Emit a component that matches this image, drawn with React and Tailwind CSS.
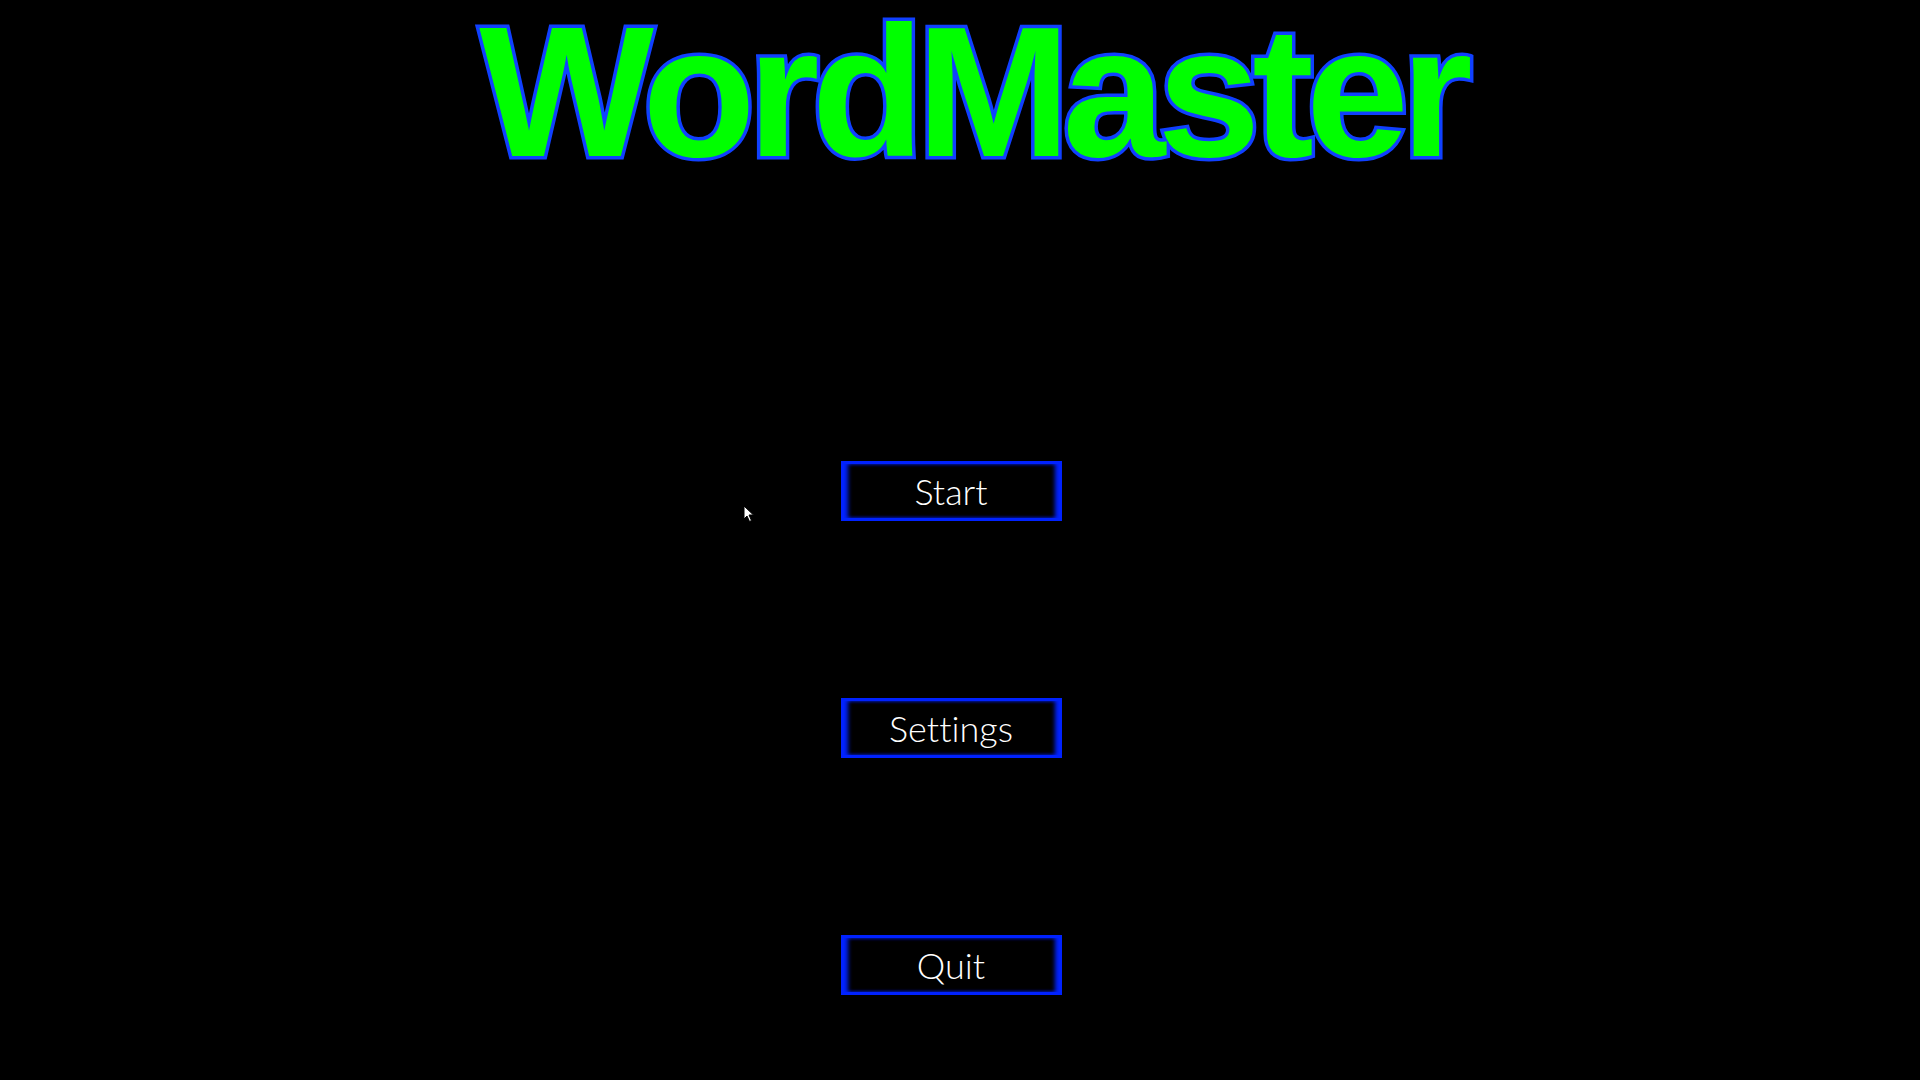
import React from 'react';

const buttons = ['Start', 'Settings', 'Quit'];

export default function App() {
  return (
    <div className="relative h-screen w-full overflow-hidden bg-black">
      <div className="flex flex-col items-center">
        {/* Title */}
        <h1
          className="ml-[24px] text-[185px] font-bold leading-none tracking-[-8px] text-[#00ff00] [-webkit-text-stroke:7px_#1040ff] [paint-order:stroke_fill]"
          style={{ fontFamily: '"Liberation Sans", Arial, sans-serif' }}
        >
          WordMaster
        </h1>

        {/* Menu */}
        <div className="mt-[276px] mr-[18px] flex flex-col gap-[177px]">
          {buttons.map((label) => (
            <button
              key={label}
              type="button"
              className="flex h-[60px] w-[221px] items-center justify-center border-[3px] border-[#0022ff] bg-black text-[36px] font-light text-white [font-variant-ligatures:none] shadow-[inset_5px_0_4px_-1px_#0022ff,inset_-5px_0_4px_-1px_#0022ff]"
              style={{ fontFamily: 'Lato, "Open Sans", sans-serif' }}
            >
              {label}
            </button>
          ))}
        </div>
      </div>

      {/* mouse pointer */}
      <svg className="absolute left-[743px] top-[505px]" width="12" height="18" viewBox="0 0 12 18">
        <path d="M1 1 L1 14 L4 11 L6.5 16.5 L8.5 15.5 L6 10 L10.5 10 Z" fill="#fff" stroke="#000" strokeWidth="1" />
      </svg>
    </div>
  );
}
